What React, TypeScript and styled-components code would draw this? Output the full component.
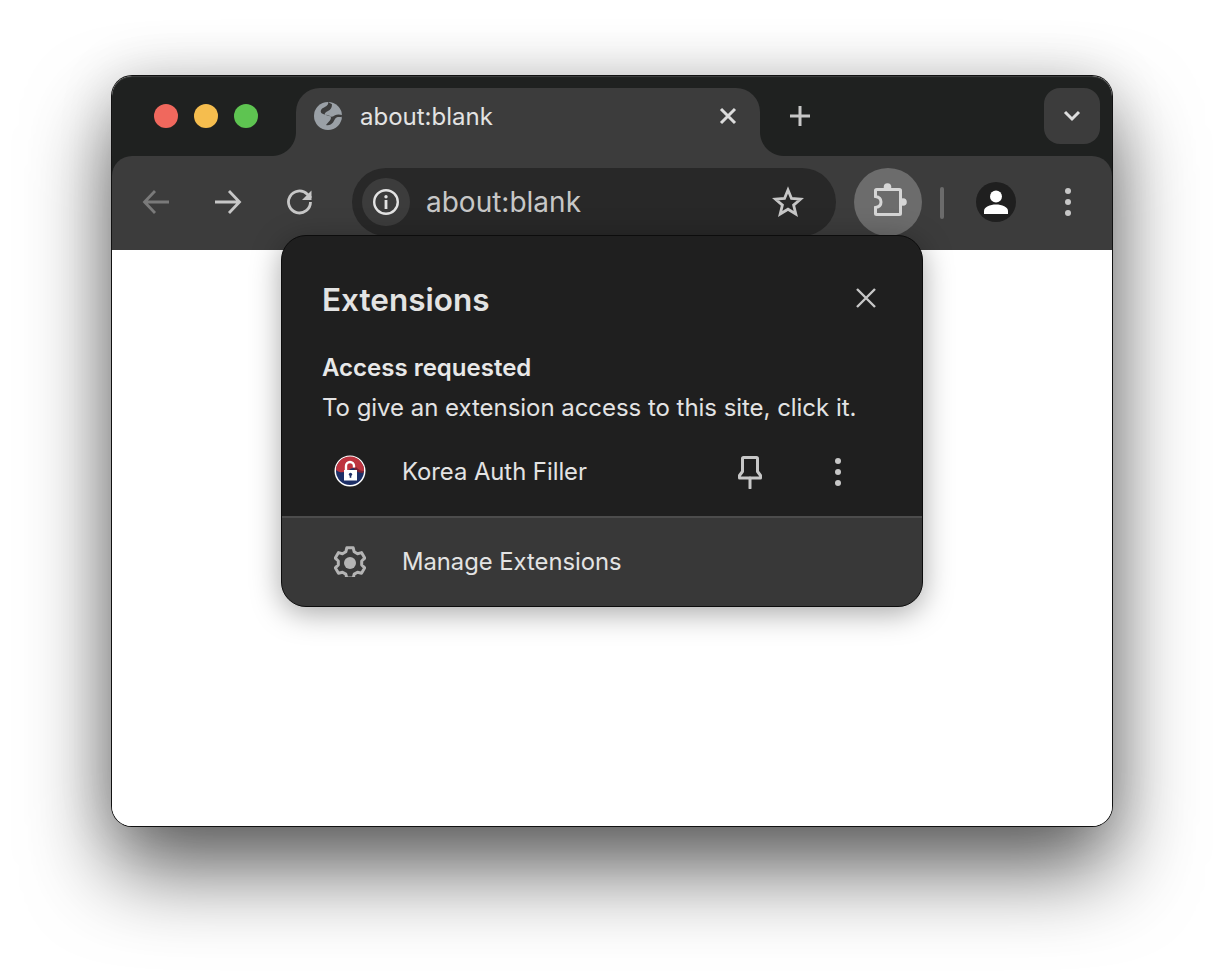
import React from "react";
import styled, { createGlobalStyle } from "styled-components";

const Global = createGlobalStyle`
  html, body { margin: 0; padding: 0; background: #fff; }
  body { font-family: Inter, "Liberation Sans", sans-serif; }
`;

const Page = styled.div`
  width: 1224px;
  height: 974px;
  padding: 76px 112px 148px;
  box-sizing: border-box;
  overflow: hidden;
`;

const Window = styled.div`
  position: relative;
  width: 1000px;
  height: 750px;
  display: flex;
  flex-direction: column;
  background: #fff;
  border-radius: 20px;
  box-shadow: 0 0 0 1px #111, 0 44px 84px rgba(0, 0, 0, 0.62), 0 0 56px rgba(0, 0, 0, 0.14);
`;

const TitleBar = styled.div`
  height: 80px;
  flex: none;
  display: flex;
  align-items: flex-start;
  padding: 12px 12px 0 42px;
  box-sizing: border-box;
  background: #1f2120;
  border-radius: 20px 20px 0 0;
  box-shadow: inset 0 1px 1px rgba(255, 255, 255, 0.14);
`;

const Lights = styled.div`
  display: flex;
  gap: 16px;
  margin-top: 16px;
`;

const Light = styled.span<{ $c: string }>`
  width: 24px;
  height: 24px;
  border-radius: 50%;
  background: ${(p) => p.$c};
`;

const Tab = styled.div`
  position: relative;
  margin-left: 38px;
  width: 464px;
  height: 68px;
  flex: none;
  display: flex;
  align-items: center;
  padding: 0 16px 12px;
  box-sizing: border-box;
  background: #3c3c3c;
  border-radius: 24px 24px 0 0;
  z-index: 1;
  &::before, &::after {
    content: "";
    position: absolute;
    bottom: 0;
    width: 24px;
    height: 24px;
  }
  &::before {
    left: -24px;
    background: radial-gradient(circle at 0 0, #1f2120 23.5px, #3c3c3c 24.5px);
  }
  &::after {
    right: -24px;
    background: radial-gradient(circle at 100% 0, #1f2120 23.5px, #3c3c3c 24.5px);
  }
`;

const TabTitle = styled.span`
  margin-left: 16px;
  flex: 1;
  font-size: 24px;
  color: #e3e3e3;
`;

const NewTab = styled.div`
  margin-left: 24px;
  width: 32px;
  height: 32px;
  margin-top: 12px;
  flex: none;
  display: flex;
`;

const Spacer = styled.div`
  flex: 1;
`;

const TabSearch = styled.div`
  width: 56px;
  height: 56px;
  flex: none;
  border-radius: 16px;
  background: #3c3c3c;
  display: flex;
  align-items: center;
  justify-content: center;
`;

const Toolbar = styled.div`
  height: 94px;
  flex: none;
  display: flex;
  align-items: center;
  background: #1f2120;
`;

const ToolbarInner = styled.div`
  width: 100%;
  height: 100%;
  display: flex;
  align-items: flex-start;
  padding: 12px 0 0 20px;
  box-sizing: border-box;
  background: #3c3c3c;
  border-radius: 20px 20px 0 0;
`;

const NavIcon = styled.div<{ $gap?: number }>`
  width: 48px;
  height: 68px;
  margin-right: ${(p) => p.$gap ?? 24}px;
  flex: none;
  display: flex;
  align-items: center;
  justify-content: center;
`;

const Omnibox = styled.div`
  width: 484px;
  height: 68px;
  flex: none;
  display: flex;
  align-items: center;
  padding: 0 32px 0 10px;
  box-sizing: border-box;
  border-radius: 34px;
  background: #282828;
`;

const InfoChip = styled.div`
  width: 48px;
  height: 48px;
  flex: none;
  border-radius: 50%;
  background: #3c3c3c;
  display: flex;
  align-items: center;
  justify-content: center;
`;

const Url = styled.span`
  margin-left: 16px;
  flex: 1;
  font-size: 28px;
  color: #c7c7c7;
`;

const ExtButton = styled.div`
  margin-left: 18px;
  width: 68px;
  height: 68px;
  flex: none;
  border-radius: 50%;
  background: #6c6c6c;
  display: flex;
  align-items: center;
  justify-content: center;
`;

const Separator = styled.div`
  margin: 19px 0 0 18px;
  width: 4px;
  height: 32px;
  flex: none;
  border-radius: 2px;
  background: #6b6b6b;
`;

const Avatar = styled.div`
  margin: 14px 0 0 32px;
  width: 40px;
  height: 40px;
  flex: none;
`;

const MenuDots = styled.div`
  margin-left: 28px;
  width: 48px;
  height: 68px;
  flex: none;
  display: flex;
  align-items: center;
  justify-content: center;
`;

const Content = styled.div`
  flex: 1;
  background: #fff;
  border-radius: 0 0 20px 20px;
`;

const Popup = styled.div`
  position: absolute;
  left: 169px;
  top: 159px;
  width: 642px;
  height: 372px;
  display: flex;
  flex-direction: column;
  box-sizing: border-box;
  border-radius: 25px;
  overflow: hidden;
  background: #1f1f1f;
  border: 1px solid #0c0c0c;
  box-shadow: 0 6px 30px rgba(0, 0, 0, 0.35);
  color: #e3e3e3;
  z-index: 2;
`;

const PopupBody = styled.div`
  flex: 1;
  display: flex;
  flex-direction: column;
  padding: 0 0 0 40px;
`;

const PopupHeader = styled.div`
  display: flex;
  align-items: flex-start;
  justify-content: space-between;
  height: 112px;
  padding: 44px 44px 0 0;
  box-sizing: border-box;
`;

const PopupTitle = styled.h2`
  margin: 0;
  font-size: 31.5px;
  line-height: 40px;
  font-weight: 600;
  color: #e3e3e3;
`;

const CloseBtn = styled.div`
  width: 24px;
  height: 24px;
  margin-top: 6px;
`;

const Subhead = styled.div`
  font-size: 24px;
  line-height: 40px;
  font-weight: 600;
  color: #e8e8e8;
`;

const Desc = styled.div`
  font-size: 24px;
  line-height: 40px;
  letter-spacing: -0.04px;
  color: #e3e3e3;
`;

const ExtRow = styled.div`
  display: flex;
  align-items: center;
  height: 48px;
  margin-top: 19px;
`;

const RowIcon = styled.div`
  width: 32px;
  height: 32px;
  margin-left: 12px;
  flex: none;
`;

const RowLabel = styled.span`
  margin-left: 36px;
  font-size: 23.8px;
  letter-spacing: -0.02px;
  color: #e3e3e3;
`;

const RowAction = styled.div<{ $ml: number; $w: number; $down?: number }>`
  margin-left: ${(p) => p.$ml}px;
  width: ${(p) => p.$w}px;
  height: 48px;
  padding-top: 2px;
  box-sizing: border-box;
  flex: none;
  display: flex;
  align-items: center;
  justify-content: center;
`;

const Footer = styled.div`
  height: 90px;
  flex: none;
  display: flex;
  align-items: center;
  padding: 0 0 2px 40px;
  background: #383838;
  border-top: 2px solid #4c4c4c;
  box-sizing: border-box;
`;

const Dots = ({ c }: { c: string }) => (
  <svg width="8" height="30" viewBox="0 0 8 30">
    <circle cx="4" cy="4" r="3" fill={c} />
    <circle cx="4" cy="15" r="3" fill={c} />
    <circle cx="4" cy="26" r="3" fill={c} />
  </svg>
);

export default function App() {
  return (
    <Page>
      <Global />
      <Window>
        <TitleBar>
          <Lights>
            <Light $c="#f0685d" />
            <Light $c="#f5bd4e" />
            <Light $c="#5ec451" />
          </Lights>
          <Tab>
            <svg width="32" height="32" viewBox="0 0 32 32">
              <circle cx="16" cy="16" r="14" fill="#9aa0a6" />
              <path d="M16 2C17 5 14 6.500 11 8 8.500 9.500 8 12 10 13.500c2 1.500 6 1 8 2.500 2 1.700.5 4-1 5.500-1.200 1.200-2 2.500-3 3.500 2.500 1 5.500-.5 7-2.500 1.500-2 1.500-4 3.500-5 1.500-.7 3.500-.5 5.300-.2l.2-2.300c-2-.6-5-.8-7 .2-1.500.8-2.500 2-4 1.300-2.500-1-5-1-6-2-1-1.200 1-2.500 3-3.500 2.500-1.300 4-3 4-6.800z" fill="#3c3c3c" />
            </svg>
            <TabTitle>about:blank</TabTitle>
            <svg width="20" height="20" viewBox="0 0 20 20" style={{ marginRight: 6 }}>
              <path d="M3 3l14 14M17 3L3 17" stroke="#dcdcdc" strokeWidth="3" fill="none" />
            </svg>
          </Tab>
          <NewTab>
            <svg width="32" height="32" viewBox="0 0 32 32">
              <path d="M16 6v20M6 16h20" stroke="#c7c7c7" strokeWidth="3" fill="none" />
            </svg>
          </NewTab>
          <Spacer />
          <TabSearch>
            <svg width="20" height="14" viewBox="0 0 20 14">
              <path d="M3 3l7 7 7-7" stroke="#dedede" strokeWidth="3" fill="none" />
            </svg>
          </TabSearch>
        </TitleBar>
        <Toolbar>
          <ToolbarInner>
            <NavIcon>
              <svg width="28" height="28" viewBox="0 0 28 28">
                <path d="M27 14H3M13 3L2.500 14 13 25" stroke="#7a7a7a" strokeWidth="2.800" fill="none" />
              </svg>
            </NavIcon>
            <NavIcon>
              <svg width="28" height="28" viewBox="0 0 28 28">
                <path d="M1 14h24M15 3l10.500 11L15 25" stroke="#c7c7c7" strokeWidth="2.800" fill="none" />
              </svg>
            </NavIcon>
            <NavIcon $gap={28}>
              <svg width="28" height="28" viewBox="0 0 28 28">
                <path d="M24.500 14a11 11 0 1 1-3.200-7.800L25 10" stroke="#c7c7c7" strokeWidth="2.800" fill="none" />
                <path d="M25.500 2.500v9.500H16" fill="#c7c7c7" />
              </svg>
            </NavIcon>
            <Omnibox>
              <InfoChip>
                <svg width="28" height="28" viewBox="0 0 28 28">
                  <circle cx="14" cy="14" r="11.800" stroke="#e3e3e3" strokeWidth="2.400" fill="none" />
                  <circle cx="14" cy="8.800" r="1.700" fill="#e3e3e3" />
                  <rect x="12.600" y="12" width="2.800" height="9" fill="#e3e3e3" />
                </svg>
              </InfoChip>
              <Url>about:blank</Url>
              <svg width="32" height="32" viewBox="0 0 32 32">
                <path d="M16 4l3.500 8.500 9 .700-6.900 5.900 2.200 8.900L16 23.200l-7.800 4.800 2.200-8.900-6.900-5.900 9-.700z" stroke="#c7c7c7" strokeWidth="2.800" strokeLinejoin="miter" fill="none" />
              </svg>
            </Omnibox>
            <ExtButton>
              <svg width="40" height="40" viewBox="-2 -2 40 40">
                <path d="M6.500 5.500h23a1 1 0 0 1 1 1v23a1 1 0 0 1-1 1h-23a1 1 0 0 1-1-1V23.500c3.500-.5 5.500-2.700 5.500-5.500s-2-5-5.500-5.500v-6a1 1 0 0 1 1-1z" stroke="#d6d6d6" strokeWidth="3" fill="none" />
                <circle cx="17.500" cy="3" r="3.800" fill="#d6d6d6" />
                <circle cx="33" cy="18" r="3.800" fill="#d6d6d6" />
              </svg>
            </ExtButton>
            <Separator />
            <Avatar>
              <svg width="40" height="40" viewBox="0 0 40 40">
                <circle cx="20" cy="20" r="20" fill="#1f1f1f" />
                <circle cx="20" cy="14.500" r="6" fill="#fff" />
                <path d="M8 32v-3c0-4 6-6.500 12-6.500S32 25 32 29v3z" fill="#fff" />
              </svg>
            </Avatar>
            <MenuDots>
              <Dots c="#c7c7c7" />
            </MenuDots>
          </ToolbarInner>
        </Toolbar>
        <Content />
        <Popup>
          <PopupBody>
            <PopupHeader>
              <PopupTitle>Extensions</PopupTitle>
              <CloseBtn>
                <svg width="24" height="24" viewBox="0 0 24 24">
                  <path d="M3 3l18 18M21 3L3 21" stroke="#c7c7c7" strokeWidth="2.400" fill="none" />
                </svg>
              </CloseBtn>
            </PopupHeader>
            <Subhead>Access requested</Subhead>
            <Desc>To give an extension access to this site, click it.</Desc>
            <ExtRow>
              <RowIcon>
                <svg width="32" height="32" viewBox="0 0 32 32">
                  <circle cx="16" cy="16" r="15.500" fill="#fff" />
                  <circle cx="16" cy="16" r="14" fill="#1d2f66" />
                  <path d="M2 15A14 14 0 0 1 30 16c-3 1-6 .5-8-2-2-2-5-1-7 1s-9 4-13 0z" fill="#bd343f" />
                  <path d="M22 12c3 3 5 4 8 4l-1 2c-3 0-6-1-9-4z" fill="#7c2233" />
                  <path d="M10 15h13v10.500H10z" fill="#fff" />
                  <path d="M12 15.500V11a4 4 0 0 1 8 0v1.500" stroke="#fff" strokeWidth="2.400" fill="none" />
                  <circle cx="16.500" cy="19.300" r="1.600" fill="#1d2f66" />
                  <rect x="15.700" y="19.300" width="1.600" height="3.500" fill="#1d2f66" />
                </svg>
              </RowIcon>
              <RowLabel>Korea Auth Filler</RowLabel>
              <RowAction $ml={143} $w={40}>
                <svg width="26" height="34" viewBox="0 0 26 34">
                  <path d="M6.500 2.500h13a1 1 0 0 1 1 1v13l3 4v2.500h-21V20.500l3-4v-13a1 1 0 0 1 1-1z" stroke="#c7c7c7" strokeWidth="3" fill="none" strokeLinejoin="round" />
                  <path d="M13 23v10" stroke="#c7c7c7" strokeWidth="3" fill="none" strokeLinecap="round" />
                </svg>
              </RowAction>
              <RowAction $ml={48} $w={40}>
                <Dots c="#c7c7c7" />
              </RowAction>
            </ExtRow>
          </PopupBody>
          <Footer>
            <RowIcon>
              <svg width="32" height="32" viewBox="0 -1 32 32">
                <path d="M12.800 1.800h6.400l1 4 3.300 1.900 4-1.100 3.200 5.500-3 2.900v3.900l3 2.900-3.200 5.500-4-1.100-3.300 1.900-1 4h-6.400l-1-4-3.300-1.900-4 1.100L1.300 21.800l3-2.900V15l-3-2.900 3.200-5.500 4 1.100 3.300-1.900z" stroke="#b4b4b4" strokeWidth="3" strokeLinejoin="round" fill="none" />
                <circle cx="16" cy="17" r="6" fill="#b4b4b4" />
              </svg>
            </RowIcon>
            <RowLabel>Manage Extensions</RowLabel>
          </Footer>
        </Popup>
      </Window>
    </Page>
  );
}
